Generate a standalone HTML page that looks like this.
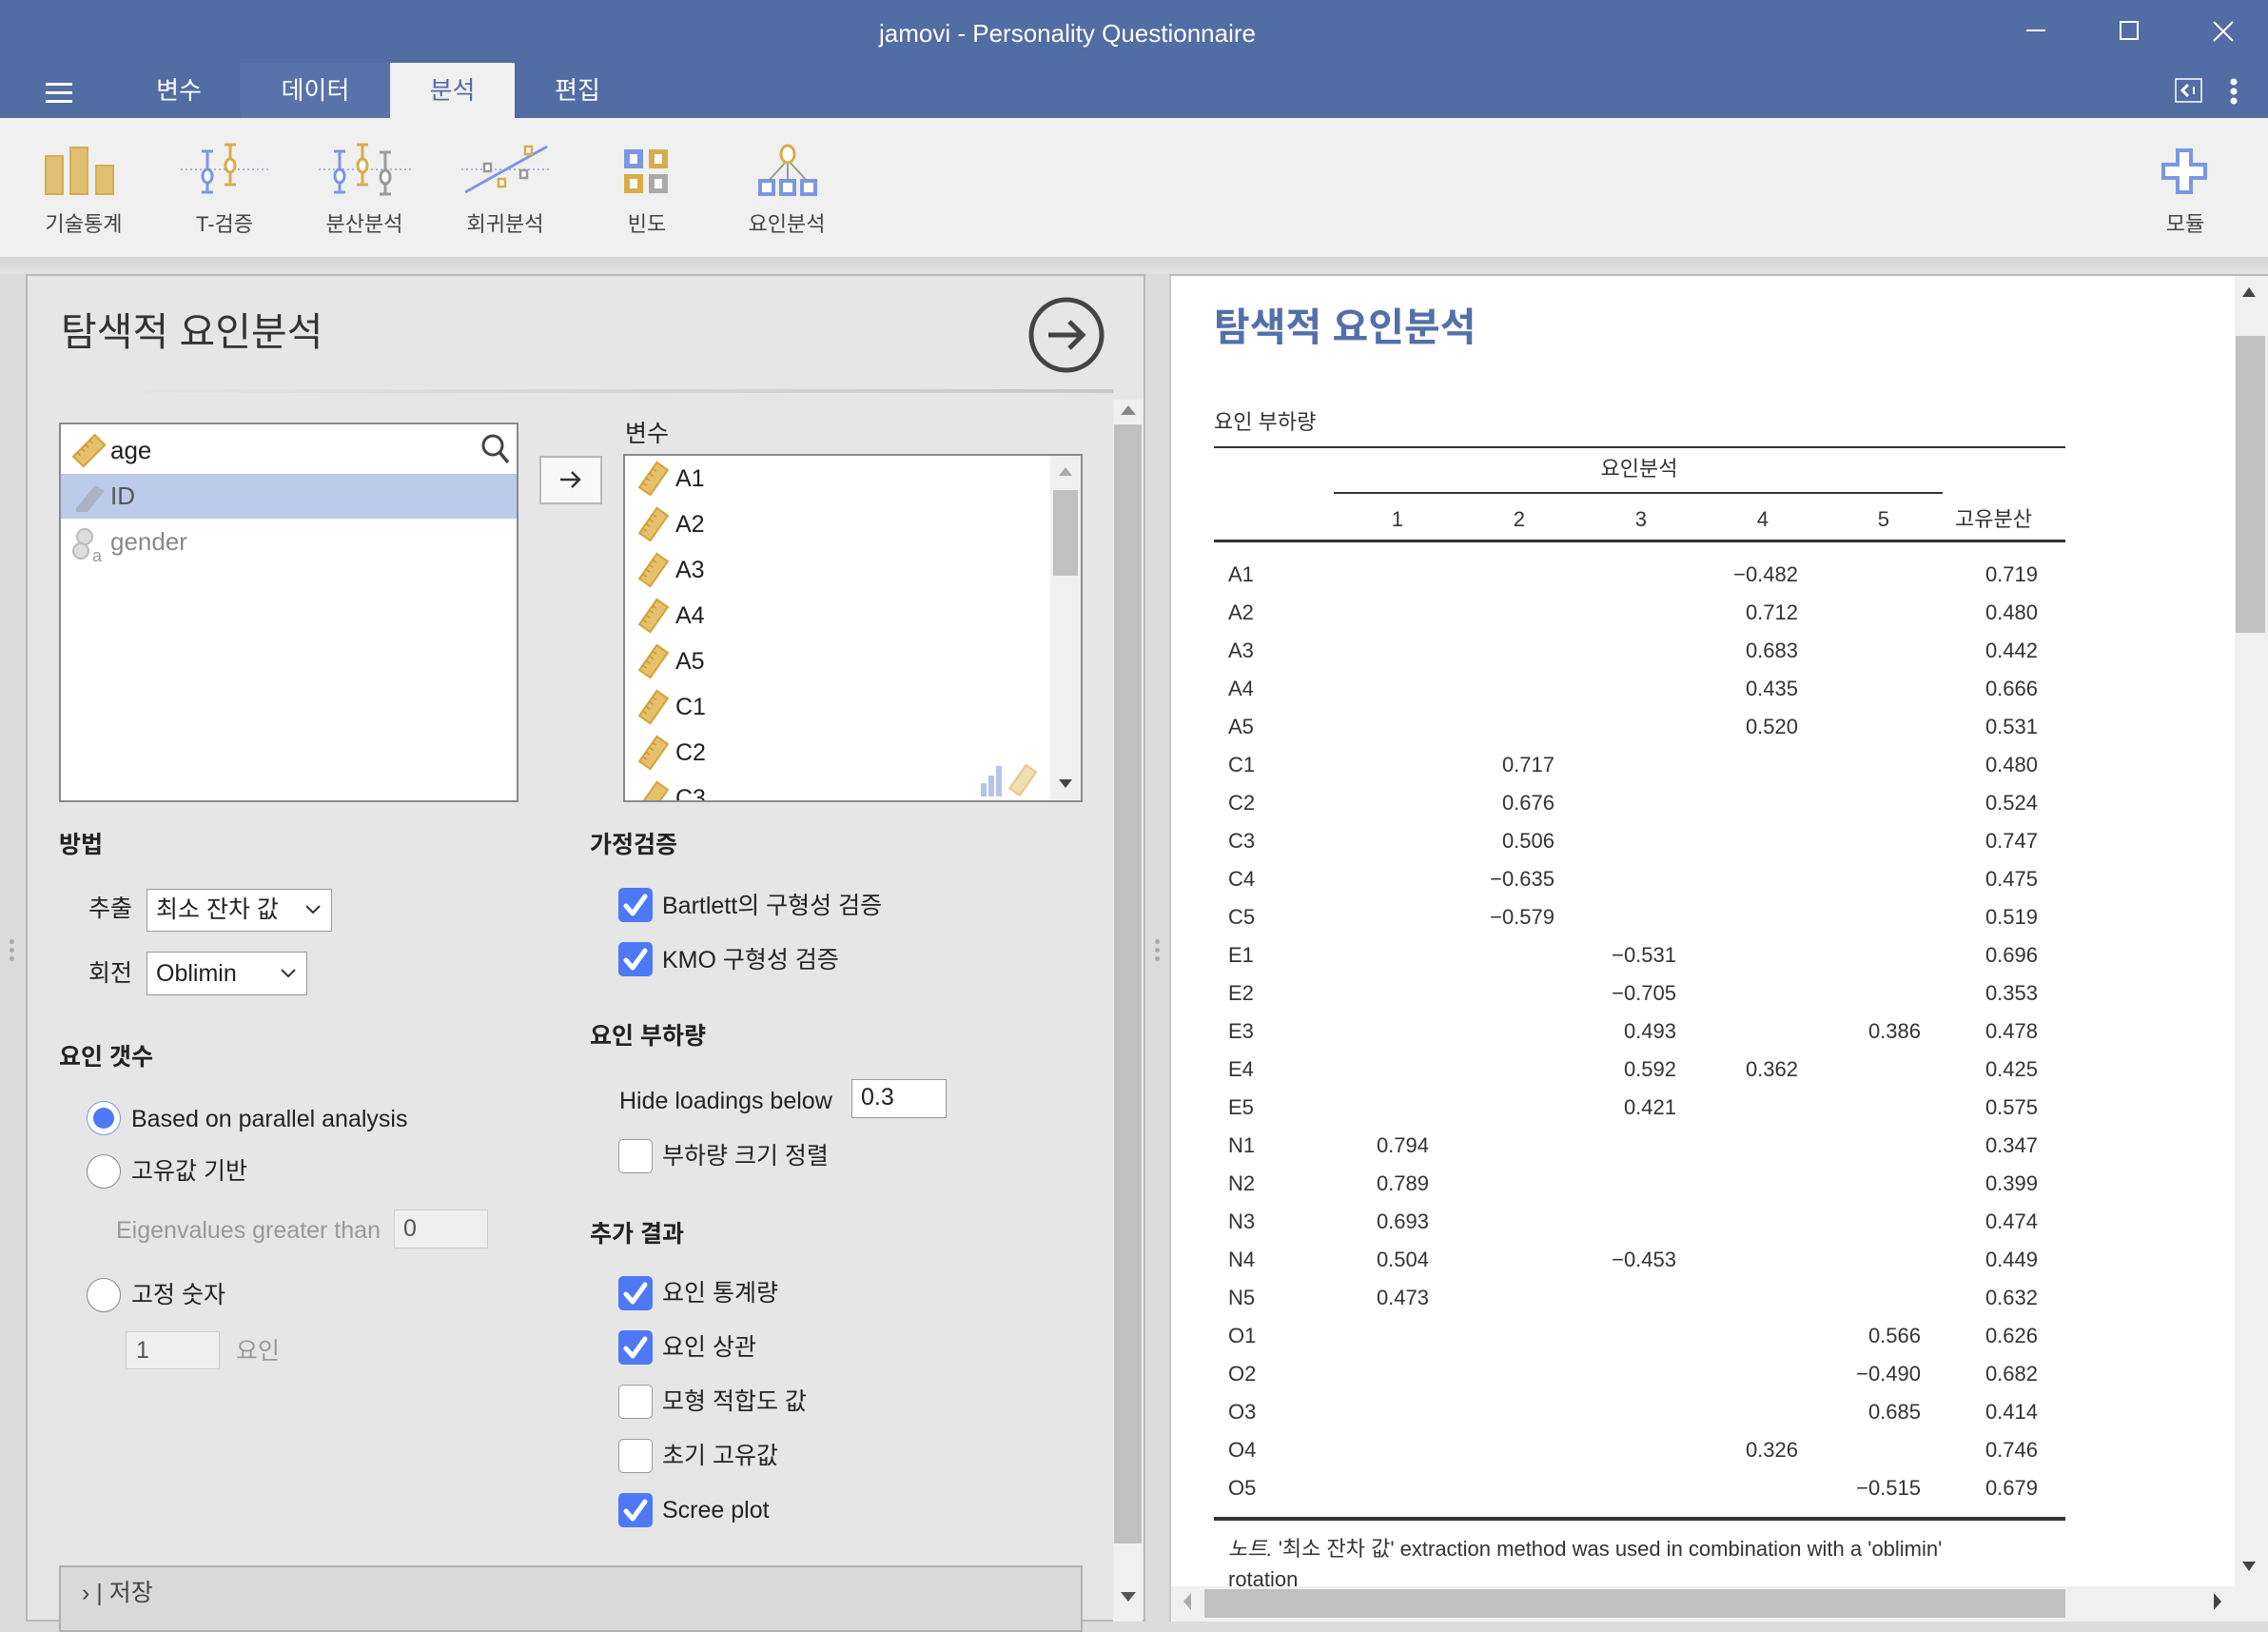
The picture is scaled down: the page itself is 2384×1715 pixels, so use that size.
<!DOCTYPE html>
<html><head><meta charset="utf-8"><style>
*{box-sizing:border-box;margin:0;padding:0}
body{width:2384px;height:1704px;overflow:hidden;background:#dcdcdc;font-family:"Liberation Sans","Noto Sans CJK KR",sans-serif;color:#222;position:relative}
.a{position:absolute}
.t{position:absolute;white-space:nowrap;line-height:1}
.tab{position:absolute;top:66px;height:58px;color:#fff;font-size:26px;line-height:58px;text-align:center}
.lbl{position:absolute;top:218px;font-size:22px;color:#444;width:160px;text-align:center}
.cb{position:absolute;width:36px;height:36px;border-radius:5px;background:#4d79f6}
.cbu{position:absolute;width:36px;height:36px;border-radius:5px;background:#fff;border:1.5px solid #999}
.ct{position:absolute;font-size:25px;line-height:30px;white-space:nowrap}
.h{position:absolute;font-size:25px;font-weight:bold;line-height:30px}
.rad{position:absolute;width:36px;height:36px;border-radius:50%;background:#fff;border:1.5px solid #888}
.row{position:absolute;left:0;width:2384px;height:30px;font-size:22px;line-height:30px;color:#333}
.row span{position:absolute;width:120px;text-align:right}
.row .k{left:1291px;text-align:left}
.c1{right:882px}.c2{right:750px}.c3{right:622px}.c4{right:494px}.c5{right:365px}.u{right:242px}
.item{position:absolute;left:0;height:48px;font-size:25px;line-height:48px}
</style></head><body>
<div class="a" style="left:0;top:0;width:2384px;height:124px;background:#526ca4"></div>
<div class="t" style="left:0;width:2244px;text-align:center;top:22px;font-size:26px;color:#fff">jamovi - Personality Questionnaire</div>
<div class="a" style="left:2130px;top:31px;width:20px;height:2px;background:#fff"></div>
<div class="a" style="left:2228px;top:22px;width:20px;height:20px;border:2px solid #fff"></div>
<svg class="a" style="left:2326px;top:22px" width="22" height="22"><path d="M1 1L21 21M21 1L1 21" stroke="#fff" stroke-width="2"/></svg>
<svg class="a" style="left:48px;top:87px" width="28" height="22"><rect y="0" width="28" height="3" fill="#fff"/><rect y="9" width="28" height="3" fill="#fff"/><rect y="18" width="28" height="3" fill="#fff"/></svg>
<div class="tab" style="left:130px;width:116px">변수</div>
<div class="tab" style="left:253px;width:157px;background:#5872aa">데이터</div>
<div class="tab" style="left:410px;width:131px;background:#f0f0f0;color:#526ca4">분석</div>
<div class="tab" style="left:548px;width:118px">편집</div>
<svg class="a" style="left:2286px;top:82px" width="30" height="28"><rect x="1" y="1" width="27" height="24" fill="none" stroke="#fff" stroke-width="1.5"/><path d="M14 7L8 13L14 19" fill="none" stroke="#fff" stroke-width="3"/><rect x="19" y="9" width="2" height="8" fill="#fff"/></svg>
<svg class="a" style="left:2342px;top:82px" width="12" height="30"><circle cx="6" cy="4" r="3.5" fill="#fff"/><circle cx="6" cy="14" r="3.5" fill="#fff"/><circle cx="6" cy="24" r="3.5" fill="#fff"/></svg>
<div class="a" style="left:0;top:124px;width:2384px;height:146px;background:#f0f0f0"></div>
<div class="a" style="left:0;top:270px;width:2384px;height:18px;background:linear-gradient(#d4d4d4,#e2e2e2)"></div>
<svg class="a" style="left:46px;top:150px" width="80" height="56"><g fill="#e0bf72" stroke="#d6ad4f" stroke-width="2"><rect x="2" y="14" width="18" height="40"/><rect x="28" y="5" width="18" height="49"/><rect x="55" y="24" width="18" height="30"/></g></svg>
<svg class="a" style="left:190px;top:150px" width="96" height="56"><path d="M0 28H94" stroke="#8ea3d6" stroke-width="1.5" stroke-dasharray="2 3"/><g stroke="#7b97e0" stroke-width="3" fill="#fff"><path d="M28 9V52M22 9h12M22 52h12"/><ellipse cx="28" cy="35" rx="5" ry="7"/></g><g stroke="#d9ac4a" stroke-width="3" fill="#fff"><path d="M52 2V44M46 2h12M46 44h12"/><ellipse cx="52" cy="24" rx="5" ry="7"/></g></svg>
<svg class="a" style="left:335px;top:150px" width="100" height="56"><path d="M0 28H98" stroke="#8ea3d6" stroke-width="1.5" stroke-dasharray="2 3"/><g stroke="#7b97e0" stroke-width="3" fill="#fff"><path d="M22 9V52M16 9h12M16 52h12"/><ellipse cx="22" cy="35" rx="5" ry="7"/></g><g stroke="#d9ac4a" stroke-width="3" fill="#fff"><path d="M46 2V44M40 2h12M40 44h12"/><ellipse cx="46" cy="24" rx="5" ry="7"/></g><g stroke="#9a9a9a" stroke-width="3" fill="#fff"><path d="M70 10V54M64 10h12M64 54h12"/><ellipse cx="70" cy="36" rx="5" ry="7"/></g></svg>
<svg class="a" style="left:485px;top:150px" width="96" height="56"><path d="M0 28H94" stroke="#8ea3d6" stroke-width="1.5" stroke-dasharray="2 3"/><path d="M4 52L90 4" stroke="#7b97e0" stroke-width="3"/><g fill="#fff" stroke-width="2.5"><rect x="24" y="22" width="7" height="8" stroke="#999"/><rect x="62" y="29" width="7" height="8" stroke="#999"/><rect x="67" y="4" width="7" height="8" stroke="#d9ac4a"/><rect x="39" y="38" width="7" height="8" stroke="#d9ac4a"/></g></svg>
<svg class="a" style="left:654px;top:155px" width="52" height="50"><rect x="2" y="2" width="20" height="20" fill="#7b97e0"/><rect x="28" y="2" width="20" height="20" fill="#d9ac4a"/><rect x="2" y="28" width="20" height="20" fill="#d9ac4a"/><rect x="28" y="28" width="20" height="20" fill="#a9a9a9"/><g fill="#fff"><rect x="8" y="7" width="8" height="10"/><rect x="34" y="7" width="8" height="10"/><rect x="8" y="33" width="8" height="10"/><rect x="34" y="33" width="8" height="10"/></g></svg>
<svg class="a" style="left:796px;top:150px" width="64" height="58"><path d="M32 18L10 42M32 18V42M32 18L54 42" stroke="#999" stroke-width="2"/><ellipse cx="32" cy="12" rx="7" ry="9" fill="#fff" stroke="#d9ac4a" stroke-width="3"/><g fill="#fff" stroke="#7b97e0" stroke-width="4"><rect x="3" y="40" width="14" height="14"/><rect x="25" y="40" width="14" height="14"/><rect x="47" y="40" width="14" height="14"/></g></svg>
<div class="lbl" style="left:8px">기술통계</div>
<div class="lbl" style="left:156px">T-검증</div>
<div class="lbl" style="left:303px">분산분석</div>
<div class="lbl" style="left:451px">회귀분석</div>
<div class="lbl" style="left:600px">빈도</div>
<div class="lbl" style="left:747px">요인분석</div>
<svg class="a" style="left:2272px;top:156px" width="50" height="50"><path d="M17 2h14v15h15v14H31v15H17V31H2V17h15z" fill="#fff" stroke="#7b97e0" stroke-width="4"/></svg>
<div class="lbl" style="left:2217px">모듈</div>
<div class="a" style="left:27px;top:288px;width:1177px;height:1416px;background:#e6e6e6;border:2px solid #b8b8b8"></div>
<div class="a" style="left:29px;top:290px;width:1173px;height:120px;background:#e6e6e6"></div>
<div class="a" style="left:60px;top:409px;width:1110px;height:4px;background:linear-gradient(90deg,#e6e6e6,#c8c8c8)"></div>
<div class="t" style="left:64px;top:329px;font-size:41px;color:#333">탐색적 요인분석</div>
<svg class="a" style="left:1080px;top:311px" width="82" height="82"><circle cx="41" cy="41" r="37" fill="none" stroke="#444" stroke-width="5"/><path d="M22 41H58M44 27L58 41L44 55" fill="none" stroke="#444" stroke-width="5"/></svg>
<div class="a" style="left:1170px;top:420px;width:31px;height:1284px;background:#f0f0f0"></div>
<div class="a" style="left:1171px;top:446px;width:29px;height:1176px;background:#c0c0c0"></div>
<svg class="a" style="left:1178px;top:426px" width="16" height="10"><path d="M0 10L8 0L16 10z" fill="#888"/></svg>
<svg class="a" style="left:1178px;top:1673px" width="16" height="10"><path d="M0 0L8 10L16 0z" fill="#555"/></svg>
<div class="a" style="left:10px;top:985px;width:5px;height:26px;background:radial-gradient(circle,#aaa 2px,transparent 3px) 0 0/5px 9px"></div>
<div class="a" style="left:1214px;top:985px;width:5px;height:26px;background:radial-gradient(circle,#aaa 2px,transparent 3px) 0 0/5px 9px"></div>
<div class="a" style="left:62px;top:444px;width:483px;height:399px;background:#fff;border:2px solid #8a8a8a;overflow:hidden">
 <div class="a" style="left:0;top:52px;width:481px;height:47px;background:#bccbea"></div>
 <svg class="a" style="left:10px;top:8px" width="40" height="40"><g transform="rotate(-45 20 20)"><rect x="4" y="12" width="32" height="15" fill="#e6c06a" stroke="#d4a33a" stroke-width="2"/><path d="M10 12v5M16 12v5M22 12v5M28 12v5" stroke="#c99a35" stroke-width="1.5"/></g></svg>
 <div class="t" style="left:52px;top:14px;font-size:26px;color:#222">age</div>
 <svg class="a" style="left:10px;top:56px" width="40" height="40"><path d="M6 32L26 8L36 14L18 36H6z" fill="#abb3c2"/></svg>
 <div class="t" style="left:52px;top:62px;font-size:26px;color:#555">ID</div>
 <svg class="a" style="left:8px;top:104px" width="40" height="44"><circle cx="17" cy="14" r="8" fill="#ddd" stroke="#bbb" stroke-width="2"/><circle cx="13" cy="29" r="8" fill="#ddd" stroke="#bbb" stroke-width="2"/><text x="25" y="40" font-size="18" fill="#999" font-family="Liberation Sans">a</text></svg>
 <div class="t" style="left:52px;top:110px;font-size:26px;color:#888">gender</div>
 <svg class="a" style="left:440px;top:8px" width="34" height="36"><circle cx="14" cy="14" r="10" fill="none" stroke="#444" stroke-width="3"/><path d="M21 21L30 32" stroke="#444" stroke-width="3.5"/></svg>
</div>
<div class="a" style="left:567px;top:479px;width:66px;height:51px;background:#f8f8f8;border:2px solid #b8b8b8"></div>
<svg class="a" style="left:588px;top:494px" width="24" height="20"><path d="M1 10H21M13 2L21 10L13 18" fill="none" stroke="#333" stroke-width="2.5"/></svg>
<div class="t" style="left:657px;top:444px;font-size:25px;color:#222">변수</div>
<div class="a" style="left:655px;top:477px;width:483px;height:366px;background:#fff;border:2px solid #8a8a8a;overflow:hidden">
 <div class="a" style="left:447px;top:0;width:32px;height:362px;background:#f0f0f0"></div>
 <div class="a" style="left:450px;top:36px;width:26px;height:90px;background:#c0c0c0"></div>
 <svg class="a" style="left:456px;top:12px" width="14" height="9"><path d="M0 9L7 0L14 9z" fill="#aaa"/></svg>
 <svg class="a" style="left:456px;top:340px" width="14" height="9"><path d="M0 0L7 9L14 0z" fill="#444"/></svg>
 <svg class="a" style="left:370px;top:322px" width="70" height="38"><rect x="4" y="22" width="6" height="14" fill="#b5c4ea"/><rect x="12" y="14" width="6" height="22" fill="#b5c4ea"/><rect x="20" y="4" width="6" height="32" fill="#b5c4ea"/><g transform="rotate(-55 48 20)"><rect x="34" y="13" width="30" height="13" fill="#f0ddb0" stroke="#e3c98c" stroke-width="2"/></g></svg>
</div>
<div class="a" style="left:663px;top:479px;width:440px;height:362px;overflow:hidden">
 <div class="item" style="top:0"><svg class="a" style="left:4px;top:4px" width="40" height="40"><g transform="rotate(-55 20 20)"><rect x="4" y="13" width="32" height="14" fill="#e6c06a" stroke="#d4a33a" stroke-width="2"/><path d="M10 13v5M16 13v5M22 13v5M28 13v5" stroke="#c99a35" stroke-width="1.5"/></g></svg><span class="a" style="left:47px">A1</span></div>
 <div class="item" style="top:48px"><svg class="a" style="left:4px;top:4px" width="40" height="40"><g transform="rotate(-55 20 20)"><rect x="4" y="13" width="32" height="14" fill="#e6c06a" stroke="#d4a33a" stroke-width="2"/><path d="M10 13v5M16 13v5M22 13v5M28 13v5" stroke="#c99a35" stroke-width="1.5"/></g></svg><span class="a" style="left:47px">A2</span></div>
 <div class="item" style="top:96px"><svg class="a" style="left:4px;top:4px" width="40" height="40"><g transform="rotate(-55 20 20)"><rect x="4" y="13" width="32" height="14" fill="#e6c06a" stroke="#d4a33a" stroke-width="2"/><path d="M10 13v5M16 13v5M22 13v5M28 13v5" stroke="#c99a35" stroke-width="1.5"/></g></svg><span class="a" style="left:47px">A3</span></div>
 <div class="item" style="top:144px"><svg class="a" style="left:4px;top:4px" width="40" height="40"><g transform="rotate(-55 20 20)"><rect x="4" y="13" width="32" height="14" fill="#e6c06a" stroke="#d4a33a" stroke-width="2"/><path d="M10 13v5M16 13v5M22 13v5M28 13v5" stroke="#c99a35" stroke-width="1.5"/></g></svg><span class="a" style="left:47px">A4</span></div>
 <div class="item" style="top:192px"><svg class="a" style="left:4px;top:4px" width="40" height="40"><g transform="rotate(-55 20 20)"><rect x="4" y="13" width="32" height="14" fill="#e6c06a" stroke="#d4a33a" stroke-width="2"/><path d="M10 13v5M16 13v5M22 13v5M28 13v5" stroke="#c99a35" stroke-width="1.5"/></g></svg><span class="a" style="left:47px">A5</span></div>
 <div class="item" style="top:240px"><svg class="a" style="left:4px;top:4px" width="40" height="40"><g transform="rotate(-55 20 20)"><rect x="4" y="13" width="32" height="14" fill="#e6c06a" stroke="#d4a33a" stroke-width="2"/><path d="M10 13v5M16 13v5M22 13v5M28 13v5" stroke="#c99a35" stroke-width="1.5"/></g></svg><span class="a" style="left:47px">C1</span></div>
 <div class="item" style="top:288px"><svg class="a" style="left:4px;top:4px" width="40" height="40"><g transform="rotate(-55 20 20)"><rect x="4" y="13" width="32" height="14" fill="#e6c06a" stroke="#d4a33a" stroke-width="2"/><path d="M10 13v5M16 13v5M22 13v5M28 13v5" stroke="#c99a35" stroke-width="1.5"/></g></svg><span class="a" style="left:47px">C2</span></div>
 <div class="item" style="top:336px"><svg class="a" style="left:4px;top:4px" width="40" height="40"><g transform="rotate(-55 20 20)"><rect x="4" y="13" width="32" height="14" fill="#e6c06a" stroke="#d4a33a" stroke-width="2"/></g></svg><span class="a" style="left:47px">C3</span></div>
</div>
<div class="h" style="left:62px;top:873px">방법</div>
<div class="ct" style="left:93px;top:940px">추출</div>
<div class="a" style="left:154px;top:934px;width:195px;height:45px;background:#fff;border:1.5px solid #999"></div>
<div class="ct" style="left:164px;top:941px">최소 잔차 값</div>
<svg class="a" style="left:321px;top:951px" width="16" height="10"><path d="M1 1L8 8L15 1" fill="none" stroke="#333" stroke-width="2"/></svg>
<div class="ct" style="left:93px;top:1008px">회전</div>
<div class="a" style="left:154px;top:1000px;width:169px;height:46px;background:#fff;border:1.5px solid #999"></div>
<div class="ct" style="left:164px;top:1008px">Oblimin</div>
<svg class="a" style="left:295px;top:1018px" width="16" height="10"><path d="M1 1L8 8L15 1" fill="none" stroke="#333" stroke-width="2"/></svg>
<div class="h" style="left:62px;top:1096px">요인 갯수</div>
<div class="rad" style="left:91px;top:1157px;border-color:#7896e6"></div><div class="a" style="left:98px;top:1164px;width:22px;height:22px;border-radius:50%;background:#4d79f6"></div>
<div class="ct" style="left:138px;top:1161px">Based on parallel analysis</div>
<div class="rad" style="left:91px;top:1213px"></div>
<div class="ct" style="left:138px;top:1216px">고유값 기반</div>
<div class="ct" style="left:122px;top:1278px;color:#999">Eigenvalues greater than</div>
<div class="a" style="left:414px;top:1271px;width:99px;height:41px;background:#efefef;border:1.5px solid #ccc"></div>
<div class="ct" style="left:424px;top:1276px;color:#555">0</div>
<div class="rad" style="left:91px;top:1343px"></div>
<div class="ct" style="left:138px;top:1346px">고정 숫자</div>
<div class="a" style="left:132px;top:1399px;width:99px;height:40px;background:#efefef;border:1.5px solid #ccc"></div>
<div class="ct" style="left:143px;top:1404px;color:#555">1</div>
<div class="ct" style="left:248px;top:1405px;color:#999">요인</div>
<div class="h" style="left:620px;top:873px">가정검증</div>
<div class="cb" style="left:650px;top:933px"></div>
<div class="ct" style="left:696px;top:937px">Bartlett의 구형성 검증</div>
<div class="cb" style="left:650px;top:990px"></div>
<div class="ct" style="left:696px;top:994px">KMO 구형성 검증</div>
<div class="h" style="left:620px;top:1074px">요인 부하량</div>
<div class="ct" style="left:651px;top:1142px">Hide loadings below</div>
<div class="a" style="left:895px;top:1134px;width:100px;height:41px;background:#fff;border:1.5px solid #999"></div>
<div class="ct" style="left:905px;top:1138px">0.3</div>
<div class="cbu" style="left:650px;top:1197px"></div>
<div class="ct" style="left:696px;top:1200px">부하량 크기 정렬</div>
<div class="h" style="left:620px;top:1282px">추가 결과</div>
<div class="cb" style="left:650px;top:1341px"></div>
<div class="ct" style="left:696px;top:1344px">요인 통계량</div>
<div class="cb" style="left:650px;top:1398px"></div>
<div class="ct" style="left:696px;top:1401px">요인 상관</div>
<div class="cbu" style="left:650px;top:1455px"></div>
<div class="ct" style="left:696px;top:1458px">모형 적합도 값</div>
<div class="cbu" style="left:650px;top:1512px"></div>
<div class="ct" style="left:696px;top:1515px">초기 고유값</div>
<div class="cb" style="left:650px;top:1569px"></div>
<div class="ct" style="left:696px;top:1572px">Scree plot</div>
<svg style="position:absolute;left:0;top:0;pointer-events:none" width="1200" height="1704"><g fill="none" stroke="#fff" stroke-width="5" stroke-linecap="round" stroke-linejoin="round"><path d="M658 952l7 8l13 -18"/><path d="M658 1009l7 8l13 -18"/><path d="M658 1360l7 8l13 -18"/><path d="M658 1417l7 8l13 -18"/><path d="M658 1588l7 8l13 -18"/></g></svg>
<div class="a" style="left:62px;top:1645px;width:1076px;height:70px;background:#d9d9d9;border:2px solid #b0b0b0"></div>
<div class="ct" style="left:86px;top:1659px;color:#444">›&nbsp;|&nbsp;저장</div>
<div class="a" style="left:1229px;top:288px;width:1155px;height:1416px;background:#fff;border-top:2px solid #b8b8b8;border-left:2px solid #c8c8c8"></div>
<div class="a" style="left:2349px;top:290px;width:35px;height:1379px;background:#f0f0f0"></div>
<div class="a" style="left:2350px;top:353px;width:31px;height:312px;background:#c0c0c0"></div>
<svg class="a" style="left:2357px;top:302px" width="14" height="10"><path d="M0 10L7 0L14 10z" fill="#444"/></svg>
<svg class="a" style="left:2357px;top:1641px" width="14" height="10"><path d="M0 0L7 10L14 0z" fill="#444"/></svg>
<div class="a" style="left:1231px;top:1667px;width:1153px;height:37px;background:#f0f0f0"></div>
<div class="a" style="left:1266px;top:1670px;width:905px;height:30px;background:#c0c0c0"></div>
<svg class="a" style="left:1244px;top:1674px" width="8" height="18"><path d="M8 0L0 9L8 18z" fill="#aaa"/></svg>
<svg class="a" style="left:2327px;top:1674px" width="8" height="18"><path d="M0 0L8 9L0 18z" fill="#444"/></svg>
<div class="t" style="left:1276px;top:324px;font-size:41px;font-weight:bold;color:#5470ab">탐색적 요인분석</div>
<div class="t" style="left:1276px;top:433px;font-size:22px;color:#333">요인 부하량</div>
<div class="a" style="left:1276px;top:469px;width:895px;height:2px;background:#333"></div>
<div class="t" style="left:1603px;width:240px;text-align:center;top:482px;font-size:22px;color:#333">요인분석</div>
<div class="a" style="left:1402px;top:517px;width:640px;height:2px;background:#333"></div>
<div class="row" style="top:531px"><span style="right:909px">1</span><span style="right:781px">2</span><span style="right:653px">3</span><span style="right:525px">4</span><span style="right:398px">5</span><span style="right:248px">고유분산</span></div>
<div class="a" style="left:1276px;top:567px;width:895px;height:3px;background:#333"></div>
<div class="row" style="top:589px"><span class="k">A1</span><span class="c4">−0.482</span><span class="u">0.719</span></div>
<div class="row" style="top:629px"><span class="k">A2</span><span class="c4">0.712</span><span class="u">0.480</span></div>
<div class="row" style="top:669px"><span class="k">A3</span><span class="c4">0.683</span><span class="u">0.442</span></div>
<div class="row" style="top:709px"><span class="k">A4</span><span class="c4">0.435</span><span class="u">0.666</span></div>
<div class="row" style="top:749px"><span class="k">A5</span><span class="c4">0.520</span><span class="u">0.531</span></div>
<div class="row" style="top:789px"><span class="k">C1</span><span class="c2">0.717</span><span class="u">0.480</span></div>
<div class="row" style="top:829px"><span class="k">C2</span><span class="c2">0.676</span><span class="u">0.524</span></div>
<div class="row" style="top:869px"><span class="k">C3</span><span class="c2">0.506</span><span class="u">0.747</span></div>
<div class="row" style="top:909px"><span class="k">C4</span><span class="c2">−0.635</span><span class="u">0.475</span></div>
<div class="row" style="top:949px"><span class="k">C5</span><span class="c2">−0.579</span><span class="u">0.519</span></div>
<div class="row" style="top:989px"><span class="k">E1</span><span class="c3">−0.531</span><span class="u">0.696</span></div>
<div class="row" style="top:1029px"><span class="k">E2</span><span class="c3">−0.705</span><span class="u">0.353</span></div>
<div class="row" style="top:1069px"><span class="k">E3</span><span class="c3">0.493</span><span class="c5">0.386</span><span class="u">0.478</span></div>
<div class="row" style="top:1109px"><span class="k">E4</span><span class="c3">0.592</span><span class="c4">0.362</span><span class="u">0.425</span></div>
<div class="row" style="top:1149px"><span class="k">E5</span><span class="c3">0.421</span><span class="u">0.575</span></div>
<div class="row" style="top:1189px"><span class="k">N1</span><span class="c1">0.794</span><span class="u">0.347</span></div>
<div class="row" style="top:1229px"><span class="k">N2</span><span class="c1">0.789</span><span class="u">0.399</span></div>
<div class="row" style="top:1269px"><span class="k">N3</span><span class="c1">0.693</span><span class="u">0.474</span></div>
<div class="row" style="top:1309px"><span class="k">N4</span><span class="c1">0.504</span><span class="c3">−0.453</span><span class="u">0.449</span></div>
<div class="row" style="top:1349px"><span class="k">N5</span><span class="c1">0.473</span><span class="u">0.632</span></div>
<div class="row" style="top:1389px"><span class="k">O1</span><span class="c5">0.566</span><span class="u">0.626</span></div>
<div class="row" style="top:1429px"><span class="k">O2</span><span class="c5">−0.490</span><span class="u">0.682</span></div>
<div class="row" style="top:1469px"><span class="k">O3</span><span class="c5">0.685</span><span class="u">0.414</span></div>
<div class="row" style="top:1509px"><span class="k">O4</span><span class="c4">0.326</span><span class="u">0.746</span></div>
<div class="row" style="top:1549px"><span class="k">O5</span><span class="c5">−0.515</span><span class="u">0.679</span></div>
<div class="a" style="left:1276px;top:1594px;width:895px;height:4px;background:#333"></div>
<div class="a" style="left:1276px;top:1612px;width:1060px;height:55px;overflow:hidden;font-size:22px;line-height:32px;color:#333"><div style="padding-left:15px"><i>노트.</i> '최소 잔차 값' extraction method was used in combination with a 'oblimin'<br>rotation</div></div>
</body></html>
